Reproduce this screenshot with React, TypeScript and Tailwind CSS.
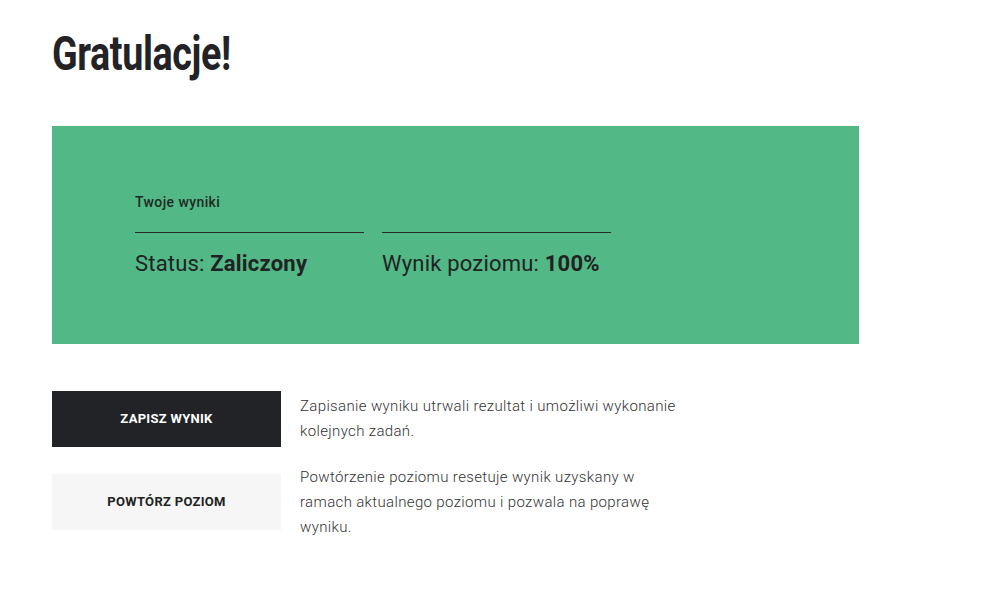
import React from "react";

export default function App() {
  return (
    <div className="min-h-[589px] w-[984px] bg-white px-[52px] pt-[28px] text-[#222] [font-family:Roboto,'Liberation_Sans',sans-serif]">
      <h1 className="origin-left scale-x-[0.785] text-[48px] font-bold leading-[52px] tracking-[-0.5px] text-[#222227]">
        Gratulacje!
      </h1>
      <div className="mt-[46px] h-[218px] w-[807px] bg-[#51b886] pl-[83px] pt-[67px]">
        <div className="text-[14px] font-medium leading-[18px] tracking-[0.4px] text-[#1f2a24]">Twoje wyniki</div>
        <div className="mt-[21px] flex gap-[18px]">
          <div className="w-[229px]">
            <div className="h-px bg-[#2a2a2a]" />
            <div className="mt-[17px] text-[22px] leading-[28px] tracking-[0.2px] text-[#222]">
              Status: <span className="font-bold">Zaliczony</span>
            </div>
          </div>
          <div className="w-[229px]">
            <div className="h-px bg-[#2a2a2a]" />
            <div className="mt-[17px] whitespace-nowrap text-[22px] leading-[28px] tracking-[0.2px] text-[#222]">
              Wynik poziomu: <span className="font-bold">100%</span>
            </div>
          </div>
        </div>
      </div>
      <div className="mt-[47px] flex flex-col gap-[27px]">
        <div className="flex items-start gap-[19px]">
          <button className="flex h-[56px] w-[229px] items-center justify-center bg-[#222327] text-[13px] font-bold uppercase tracking-[0.3px] text-white">
            Zapisz wynik
          </button>
          <p className="mt-[3px] w-[390px] text-[15px] font-light leading-[25px] tracking-[0.35px] text-[#333]">
            Zapisanie wyniku utrwali rezultat i umożliwi wykonanie kolejnych zadań.
          </p>
        </div>
        <div className="flex items-start gap-[19px]">
          <button className="flex h-[56px] w-[229px] items-center justify-center bg-[#f6f6f6] text-[13px] font-bold uppercase tracking-[0.3px] text-[#222]">
            Powtórz poziom
          </button>
          <p className="mt-[-9px] w-[385px] text-[15px] font-light leading-[25px] tracking-[0.35px] text-[#333]">
            Powtórzenie poziomu resetuje wynik uzyskany w ramach aktualnego poziomu i pozwala na poprawę wyniku.
          </p>
        </div>
      </div>
    </div>
  );
}
